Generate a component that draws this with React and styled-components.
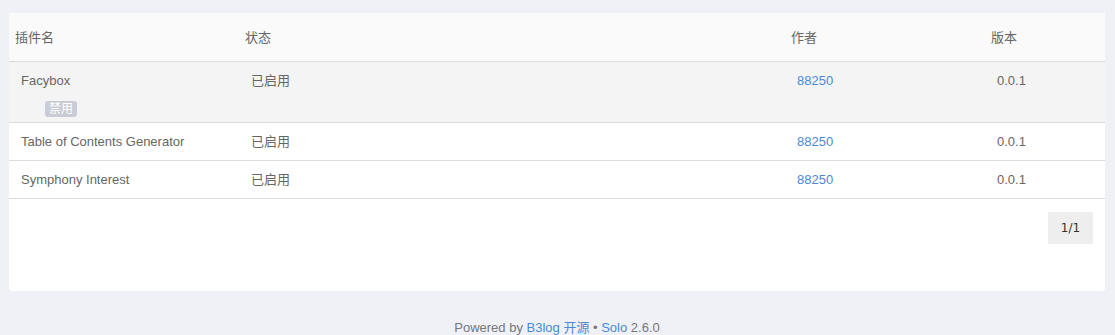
import styled, { createGlobalStyle } from 'styled-components'

const GlobalStyle = createGlobalStyle`
	body {
		margin: 0;
		background: #f0f1f6;
		font-family: "Liberation Sans", "Noto Sans CJK SC", sans-serif;
		font-size: 13px;
		color: #666;
	}
`

const Page = styled.div`
	padding: 13px 10px 0 9px;
`

const Panel = styled.div`
	background: #fff;
	border-radius: 3px;
	height: 278px;
	display: flex;
	flex-direction: column;
`

const Table = styled.table`
	width: 100%;
	border-collapse: collapse;
	table-layout: fixed;
`

const Head = styled.th`
	box-sizing: border-box;
	text-align: left;
	font-weight: normal;
	color: #666;
	height: 48px;
	padding: 0 6px;
	background: #fafafa;
	border-bottom: 1px solid #dcdcdc;
	width: ${(p) => (p.w ? `${p.w}px` : 'auto')};
`

const Row = styled.tr`
	background: ${(p) => (p.active ? '#f4f4f4' : '#fff')};
	border-bottom: 1px solid #dcdcdc;
`

const Cell = styled.td`
	line-height: 18px;
	padding: ${(p) => (p.tall ? '10px 12px 0' : '2px 12px 0')};
	height: ${(p) => (p.tall ? '50px' : '35px')};
	vertical-align: ${(p) => (p.tall ? 'top' : 'middle')};
	color: #666;
`

const Link = styled.a`
	color: #4a8ad4;
	text-decoration: none;
`

const Badge = styled.span`
	display: inline-block;
	vertical-align: top;
	margin: 11px 0 0 24px;
	padding: 0 4px;
	height: 16px;
	line-height: 16px;
	border-radius: 3px;
	background: #c9ccd5;
	color: #fff;
	font-size: 12px;
`

const Pager = styled.div`
	display: flex;
	justify-content: flex-end;
	padding: 13px 12px 0;
`

const PageButton = styled.button`
	border: 0;
	background: #eee;
	color: #333;
	width: 45px;
	height: 32px;
	font-family: "DejaVu Sans", sans-serif;
	font-size: 12px;
`

const Footer = styled.footer`
	text-align: center;
	font-size: 13px;
	color: #777;
	padding-top: 26px;
`

const plugins = [
	{ name: 'Facybox', badge: true },
	{ name: 'Table of Contents Generator' },
	{ name: 'Symphony Interest' },
]

const App = () => {
	return (
		<>
			<GlobalStyle />
			<Page>
				<Panel>
					<Table>
						<thead>
							<tr>
								<Head w={230}>插件名</Head>
								<Head w={546}>状态</Head>
								<Head w={200}>作者</Head>
								<Head>版本</Head>
							</tr>
						</thead>
						<tbody>
							{plugins.map((p) => (
								<Row key={p.name} active={p.badge}>
									<Cell tall={p.badge}>
										{p.name}
										{p.badge && (
											<div>
												<Badge>禁用</Badge>
											</div>
										)}
									</Cell>
									<Cell tall={p.badge}>已启用</Cell>
									<Cell tall={p.badge}>
										<Link href="#">88250</Link>
									</Cell>
									<Cell tall={p.badge}>0.0.1</Cell>
								</Row>
							))}
						</tbody>
					</Table>
					<Pager>
						<PageButton>1/1</PageButton>
					</Pager>
				</Panel>
				<Footer>
					Powered by <Link href="#">B3log 开源</Link> &bull; <Link href="#">Solo</Link> 2.6.0
				</Footer>
			</Page>
		</>
	)
}

export default App
